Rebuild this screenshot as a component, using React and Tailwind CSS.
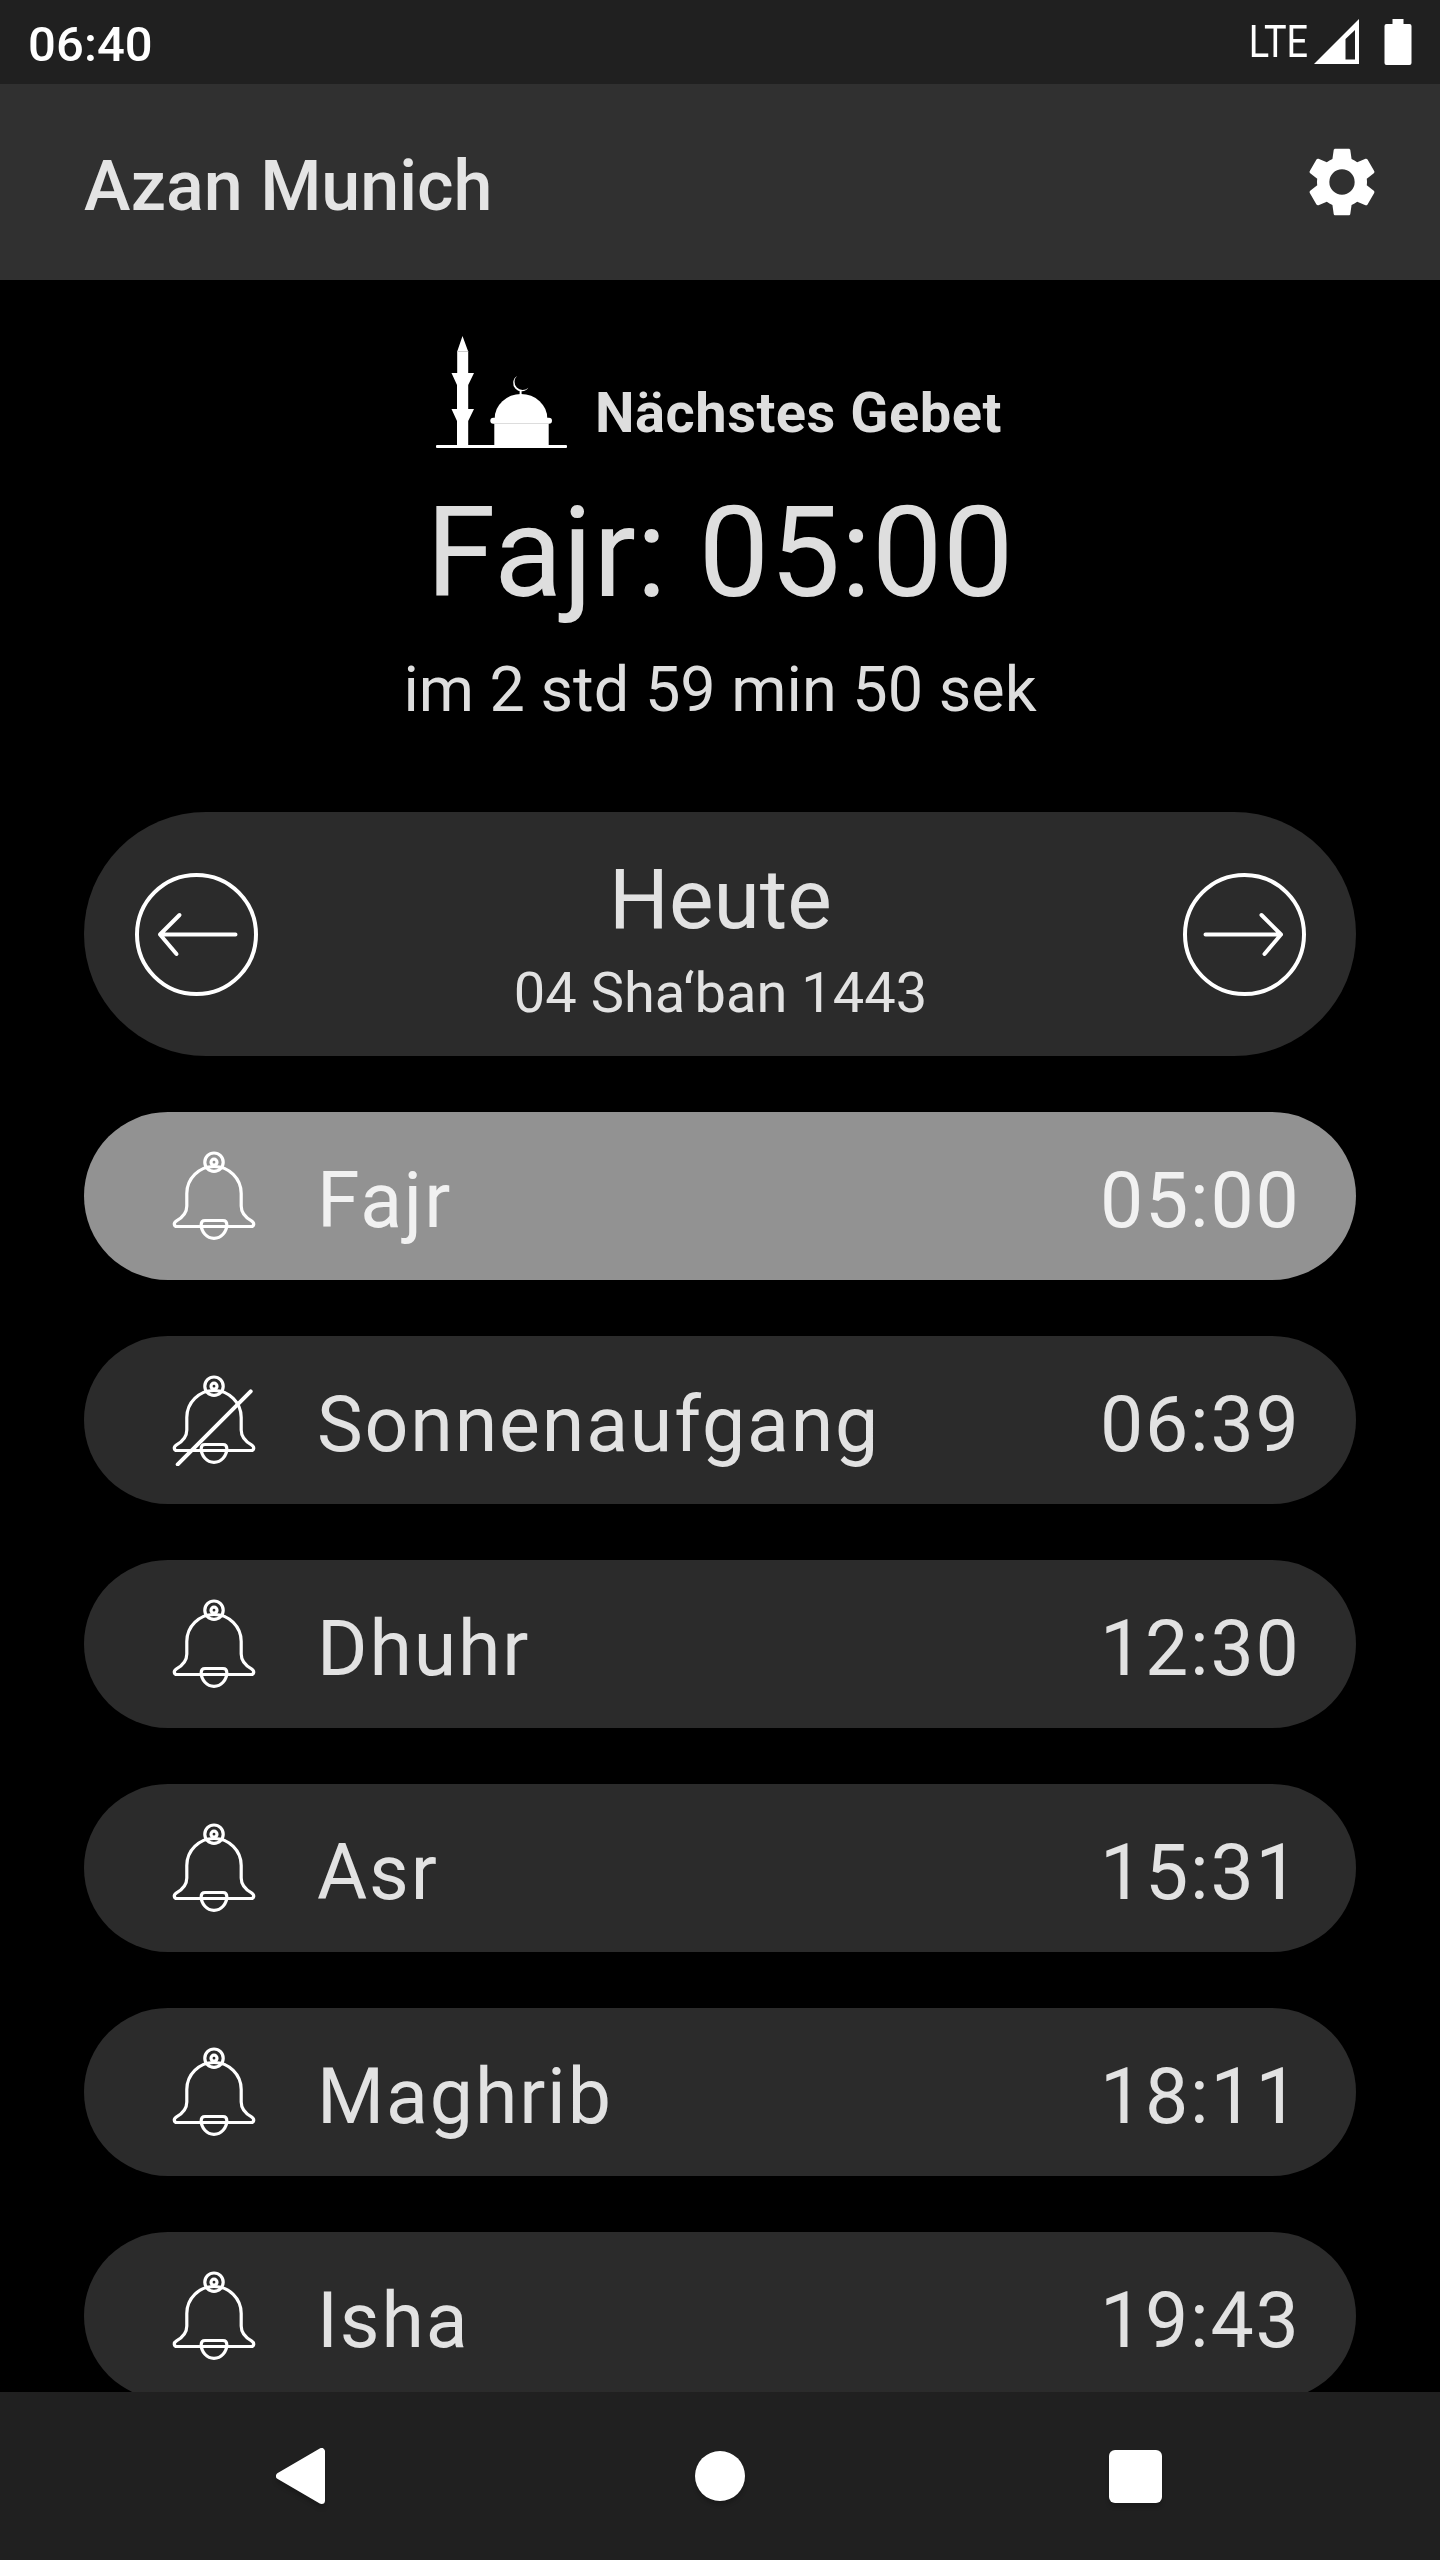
const prayers = [
  { name: "Fajr", time: "05:00", active: true },
  { name: "Sonnenaufgang", time: "06:39", muted: true },
  { name: "Dhuhr", time: "12:30" },
  { name: "Asr", time: "15:31" },
  { name: "Maghrib", time: "18:11" },
  { name: "Isha", time: "19:43" },
];

function Bell({ muted }) {
  return (
    <svg className="block h-[92px] w-[84px] shrink-0" viewBox="0 0 84 92" fill="none" stroke="#fff" strokeWidth="3.200" strokeLinecap="round" strokeLinejoin="round">
      <circle cx="42" cy="12.200" r="9.200" />
      <circle cx="42" cy="12.200" r="3" />
      <path d="M42 16.500C27 16.500 14.800 28.500 14.800 43.500V56C14.800 62 10.500 67.500 4.500 70.800C1 73 2 76.500 5 76.500H79C82 76.500 83 73 79.500 70.800C73.500 67.500 69.200 62 69.200 56V43.500C69.200 28.500 57 16.500 42 16.500z" />
      <path d="M33 70.500h18q3.800 0 3.800 4a12.800 13.800 0 0 1-25.600 0q0-4 3.800-4z" />
      {muted && <path d="M5.700 90.300L78.700 17.300" strokeWidth="4" />}
    </svg>
  );
}

function Arrow({ right }) {
  return (
    <svg className={right ? "block h-[124px] w-[124px] -scale-x-100" : "block h-[124px] w-[124px]"} viewBox="-0.5 -0.5 124 124" fill="none" stroke="#fff" strokeWidth="4" strokeLinecap="round" strokeLinejoin="round">
      <circle cx="62" cy="62" r="59.500" />
      <path d="M101 62H25.500M45 42.500L25.500 62L42 81.500" />
    </svg>
  );
}

function Mosque() {
  return (
    <svg className="block h-[114px] w-[132px]" viewBox="436 335 132 114" fill="#fff">
      <path d="M462.500 336L468.200 351.500V373H474L468.200 385V409H474L468.200 421V445H457V421L451.500 409H457V385L451.500 373H457.200V351.500z" />
      <path d="M457.200 351.500h11" stroke="#ccc" strokeWidth="1" />
      <rect x="436" y="445" width="131" height="3" rx="1" />
      <path d="M494.700 418.500a26.300 24.500 0 0 1 52.600 0z" />
      <path d="M494.300 423h54.400v22h-54.400z" />
      <rect x="490.300" y="417.700" width="61.700" height="6" rx="3" />
      <path d="M494 423.500h55" stroke="#ddd" strokeWidth="1" />
      <path d="M519.600 390h2v6h-2z" />
      <path d="M517 376a8.300 8.300 0 1 0 11.300 11.700a7.700 7.700 0 0 1-11.300-11.700z" />
    </svg>
  );
}

export default function App() {
  return (
    <div className="flex h-[2560px] w-[1440px] flex-col overflow-hidden bg-black font-['Roboto',sans-serif] text-[#dedede]">
      <header className="flex h-[84px] shrink-0 items-center justify-between bg-[#202020] px-7 text-white">
        <span className="mt-[4px] text-[49px] leading-none font-medium tracking-[0.1px]">06:40</span>
        <div className="flex items-center">
          <span className="origin-right scale-x-[0.86] text-[44px] leading-none">LTE</span>
          <svg className="ml-[6px] block h-[46px] w-[46px]" viewBox="0 0 46 46" fill="#fff">
            <path fillRule="evenodd" d="M0 45L45 0V45zM31.500 20V40.500H41V11z" />
          </svg>
          <svg className="ml-[24px] block h-[46px] w-[28px]" viewBox="0 0 28 46" fill="#fff">
            <path d="M8.500 0h11v5h6q2 0 2 2v37q0 2-2 2h-23q-2 0-2-2v-37q0-2 2-2h6z" />
          </svg>
        </div>
      </header>
      <div className="flex h-[196px] shrink-0 items-center justify-between bg-[#303030] pr-[58px] pl-[84px]">
        <h1 className="mt-[8px] text-[70px] leading-none font-medium text-[#e4e4e4]">Azan Munich</h1>
        <svg className="block h-[80px] w-[80px]" viewBox="0 0 24 24" fill="#fff">
          <path d="M19.430 12.980c.04-.32.07-.64.07-.98s-.03-.66-.07-.98l2.110-1.650c.19-.15.24-.42.12-.64l-2-3.460c-.12-.22-.39-.3-.61-.22l-2.490 1c-.52-.4-1.080-.73-1.690-.98l-.38-2.650C14.460 2.180 14.250 2 14 2h-4c-.25 0-.46.18-.49.42l-.38 2.650c-.61.25-1.170.59-1.690.98l-2.490-1c-.23-.09-.49 0-.61.22l-2 3.460c-.13.22-.07.49.12.64l2.110 1.650c-.04.32-.07.65-.07.98s.03.66.07.98l-2.110 1.650c-.19.15-.24.42-.12.64l2 3.460c.12.22.39.3.61.22l2.490-1c.52.4 1.080.73 1.690.98l.38 2.650c.03.24.24.42.49.42h4c.25 0 .46-.18.49-.42l.38-2.650c.61-.25 1.170-.59 1.690-.98l2.490 1c.23.09.49 0 .61-.22l2-3.460c.12-.22.07-.49-.12-.64l-2.110-1.650zM12 15.800a3.800 3.800 0 1 1 0-7.600a3.800 3.800 0 0 1 0 7.600z" />
        </svg>
      </div>
      <main className="flex min-h-0 flex-1 flex-col overflow-hidden px-[84px] pt-[55px]">
        <div className="flex h-[114px] shrink-0 items-end justify-center gap-[27.5px] pr-[2.5px]">
          <Mosque />
          <h2 className="mb-[8px] text-[56px] leading-none font-bold tracking-[0.5px]">Nächstes Gebet</h2>
        </div>
        <div className="mt-[30px] h-[148px] shrink-0 text-center text-[126px] leading-[148px] tracking-[0.3px]">Fajr: 05:00</div>
        <div className="mt-[26px] h-[74px] shrink-0 text-center text-[63px] leading-[74px]">im 2 std 59 min 50 sek</div>
        <section className="mt-[85px] flex h-[244px] shrink-0 items-center justify-between rounded-full bg-[#2b2b2b] pr-[49px] pl-[50px] text-[#e2e2e2]">
          <Arrow />
          <div className="flex flex-col items-center gap-[11px] pt-[9px]">
            <div className="text-[84px] leading-[98px]">Heute</div>
            <div className="text-[56px] leading-[66px]">04 Sha‘ban 1443</div>
          </div>
          <Arrow right />
        </section>
        <ul className="mt-14 flex shrink-0 flex-col gap-14">
          {prayers.map((p) => (
            <li
              key={p.name}
              className={
                p.active
                  ? "flex h-[168px] items-center rounded-full bg-[#929292] pr-[55.5px] pl-[88px] text-[#f1f1f1]"
                  : "flex h-[168px] items-center rounded-full bg-[#2b2b2b] pr-[55.5px] pl-[88px] text-[#e2e2e2]"
              }
            >
              <Bell muted={p.muted} />
              <span className="mt-[11px] ml-[61px] text-[77px] leading-none tracking-[1.85px]">{p.name}</span>
              <span className="mt-[11px] ml-auto text-[77px] leading-none tracking-[1.75px]">{p.time}</span>
            </li>
          ))}
        </ul>
      </main>
      <nav className="flex h-[168px] shrink-0 items-center justify-between bg-[#202020] pr-[278px] pl-[276px]">
        <svg className="block h-[58px] w-[55px] drop-shadow-[0_4px_2px_rgba(0,0,0,0.2)]" viewBox="0 0 55 58" fill="#fff" stroke="#fff" strokeWidth="7" strokeLinejoin="round">
          <path d="M45.500 4.500V53.500L3.500 29z" />
        </svg>
        <div className="h-[50px] w-[50px] rounded-full bg-white shadow-[0_4px_4px_rgba(0,0,0,0.2)]" />
        <div className="h-[53px] w-[53px] rounded-[6px] bg-white shadow-[0_4px_4px_rgba(0,0,0,0.2)]" />
      </nav>
    </div>
  );
}
